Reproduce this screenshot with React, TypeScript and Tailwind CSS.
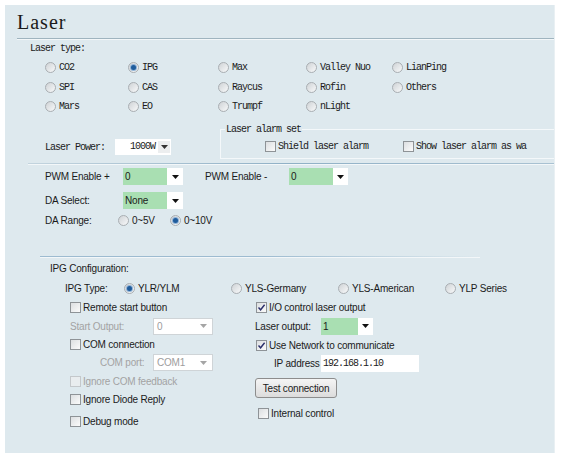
const mono = "font-['Liberation_Mono',monospace] text-[10px] tracking-[-1px] text-[#1b1b1b]";
const sans = "font-['Liberation_Sans',Arial,sans-serif] text-[10px] tracking-[-0.2px] text-[#1b1b1b]";

function Radio({ checked = false, label, className = "" }: { checked?: boolean; label: string; className?: string }) {
  return (
    <span className={`flex items-center gap-[3px] ${className}`}>
      <span className="flex h-[11px] w-[11px] shrink-0 items-center justify-center rounded-full border border-[#a9aeb2] bg-linear-to-br from-[#cfd3d6] to-[#f8f9fa]">
        {checked && <span className="h-[5px] w-[5px] rounded-full bg-[#1f5c9c] shadow-[0_0_0_1px_#8fb2d6]" />}
      </span>
      <span>{label}</span>
    </span>
  );
}

function Check({ checked = false, disabled = false }: { checked?: boolean; disabled?: boolean }) {
  return (
    <span
      className={`flex h-[11px] w-[11px] shrink-0 items-center justify-center border ${
        disabled ? "border-[#c4c8cb] bg-[#e9edef]" : "border-[#8e9397] bg-linear-to-br from-[#dcdfe1] to-[#fbfbfb]"
      }`}
    >
      {checked && (
        <svg width="9" height="9" viewBox="0 0 9 9">
          <path d="M1.5 4.5 L3.6 6.8 L7.6 1.8" fill="none" stroke="#2a2f6b" strokeWidth="1.4" />
        </svg>
      )}
    </span>
  );
}

function Arrow({ color = "#111" }: { color?: string }) {
  return (
    <svg width="7" height="4" viewBox="0 0 7 4">
      <path d="M0 0 H7 L3.5 4 Z" fill={color} />
    </svg>
  );
}

function GreenCombo({ value, w, aw }: { value: string; w: number; aw: number }) {
  return (
    <div className="flex h-[17px]">
      <div className="flex items-center bg-[#a9dfb2] pl-[2px]" style={{ width: w }}>
        {value}
      </div>
      <div className="flex items-center justify-center bg-white" style={{ width: aw }}>
        <Arrow />
      </div>
    </div>
  );
}

function GrayCombo({ value }: { value: string }) {
  return (
    <div className="flex h-[17px] w-[60px] items-center justify-between border border-[#cfd4d7] bg-white pl-[3px] pr-[5px] text-[#9d9d9d]">
      <span>{value}</span>
      <Arrow color="#a5a5a5" />
    </div>
  );
}

export default function App() {
  return (
    <div className="h-[459px] w-[564px] bg-white pl-[5px] pt-[5px]">
      <div className="h-[448px] w-[550px] overflow-hidden border-r border-[#e9f0f3] bg-[#dee9ee]">
        {/* Title */}
        <div className="ml-[12px] flex h-[34px] items-center border-b border-[#9fb4bf] font-['Liberation_Serif',serif] text-[20px] tracking-[1px] text-[#1a1a1a] shadow-[0_1px_0_#f3f7f9]">
          Laser
        </div>

        <div className={`${mono} flex h-[19px] items-center pl-[25px]`}>Laser type:</div>
        <div className={`${mono} pl-[40px]`}>
          {[
            ["CO2", "IPG", "Max", "Valley Nuo", "LianPing"],
            ["SPI", "CAS", "Raycus", "Rofin", "Others"],
            ["Mars", "EO", "Trumpf", "nLight", ""],
          ].map((row, i) => (
            <div key={i} className="flex h-[19.5px] items-center">
              <div className="w-[83px]"><Radio label={row[0]} /></div>
              <div className="w-[90px]"><Radio label={row[1]} checked={row[1] === "IPG"} /></div>
              <div className="w-[88px]"><Radio label={row[2]} /></div>
              <div className="w-[86px]"><Radio label={row[3]} /></div>
              <div>{row[4] && <Radio label={row[4]} />}</div>
            </div>
          ))}
        </div>

        {/* Power + alarm */}
        <div className={`${mono} flex h-[44px]`}>
          <div className="flex w-[215px] shrink-0 items-start pl-[40px] pt-[22px]">
            <div className="flex h-[17px] w-[70px] items-center">Laser Power:</div>
            <div className="flex h-[16px] w-[56px] items-center bg-white">
              <span className="flex-1 pr-[3px] text-right">1000W</span>
              <span className="mr-[1px] flex h-[12px] w-[12px] items-center justify-center bg-[#eceeef]">
                <Arrow color="#333" />
              </span>
            </div>
          </div>
          <fieldset className="mt-[7px] h-[35px] flex-1 border border-r-0 border-[#f4f8fa] pl-[4px]">
            <legend className="px-[1px] leading-[12px]">Laser alarm set</legend>
            <div className="flex h-[22px] items-center pl-[40px]">
              <div className="flex w-[138px] items-center gap-[2px]">
                <Check />
                <span>Shield laser alarm</span>
              </div>
              <div className="flex items-center gap-[2px]">
                <Check />
                <span>Show laser alarm as wa</span>
              </div>
            </div>
          </fieldset>
        </div>

        <div className="ml-[23px] mt-[2px] h-[1px] bg-linear-to-r from-[#c3d4de] via-[#8fb0c6] to-[#a9c2d2] shadow-[0_1px_0_#f3f7f9]" />

        {/* PWM / DA */}
        <div className={`${sans} pl-[40px]`}>
          <div className="flex h-[26px] items-center">
            <div className="w-[78px]">PWM Enable +</div>
            <GreenCombo value="0" w={44} aw={16} />
            <div className="ml-[22px] w-[84px]">PWM Enable -</div>
            <GreenCombo value="0" w={44} aw={15} />
          </div>
          <div className="flex h-[22px] items-center">
            <div className="w-[78px]">DA Select:</div>
            <GreenCombo value="None" w={44} aw={16} />
          </div>
          <div className="flex h-[18px] items-center">
            <div className="w-[73px]">DA Range:</div>
            <Radio label="0~5V" className="w-[52px]" />
            <Radio label="0~10V" checked />
          </div>
        </div>

        <div className="ml-[35px] mt-[26.5px] h-[1px] w-[440px] bg-linear-to-r from-[#9dbbd0] via-[#9dbbd0] to-transparent shadow-[0_1px_0_#f3f7f9]" />

        {/* IPG */}
        <div className={`${sans}`}>
          <div className="flex h-[22px] items-center pl-[45px]">IPG Configuration:</div>
          <div className="flex h-[19px] items-center pl-[60px]">
            <div className="w-[59px]">IPG Type:</div>
            <Radio label="YLR/YLM" checked className="w-[107px]" />
            <Radio label="YLS-Germany" className="w-[107px]" />
            <Radio label="YLS-American" className="w-[107px]" />
            <Radio label="YLP Series" />
          </div>

          <div className="flex">
            <div className="box-content w-[184px] shrink-0 pl-[65px]">
              <div className="flex h-[18px] items-center gap-[2px]">
                <Check />
                <span>Remote start button</span>
              </div>
              <div className="flex h-[20px] items-center text-[#a3a3a3]">
                <span className="w-[83px]">Start Output:</span>
                <GrayCombo value="0" />
              </div>
              <div className="flex h-[17px] items-center gap-[2px]">
                <Check />
                <span>COM connection</span>
              </div>
              <div className="flex h-[19px] items-center text-[#a3a3a3]">
                <span className="w-[83px] pl-[30px]">COM port:</span>
                <GrayCombo value="COM1" />
              </div>
              <div className="flex h-[18px] items-center gap-[2px] text-[#a3a3a3]">
                <Check disabled />
                <span>Ignore COM feedback</span>
              </div>
              <div className="flex h-[19px] items-center gap-[2px]">
                <Check />
                <span>Ignore Diode Reply</span>
              </div>
              <div className="flex h-[24px] items-center gap-[2px]">
                <Check />
                <span>Debug mode</span>
              </div>
            </div>

            <div className="pl-[1px]">
              <div className="flex h-[18px] items-center gap-[2px] pl-[1px]">
                <Check checked />
                <span>I/O control laser output</span>
              </div>
              <div className="flex h-[20px] items-center">
                <span className="w-[66px]">Laser output:</span>
                <GreenCombo value="1" w={37} aw={15} />
              </div>
              <div className="flex h-[18px] items-center gap-[2px] pl-[1px]">
                <Check checked />
                <span>Use Network to communicate</span>
              </div>
              <div className="flex h-[18px] items-center">
                <span className="w-[66px] pl-[19px]">IP address</span>
                <div className={`${mono} flex h-[17px] w-[98px] items-center bg-white pl-[2px]`}>192.168.1.10</div>
              </div>
              <div className="flex h-[32px] items-center">
                <button className="h-[20px] w-[82px] rounded-[3px] border border-[#8d8d8d] bg-linear-to-b from-[#f5f5f5] to-[#dcdcdc] text-center">
                  Test connection
                </button>
              </div>
              <div className="flex h-[18px] items-center gap-[2px] pl-[3px]">
                <Check />
                <span>Internal control</span>
              </div>
            </div>
          </div>
        </div>
      </div>
    </div>
  );
}
